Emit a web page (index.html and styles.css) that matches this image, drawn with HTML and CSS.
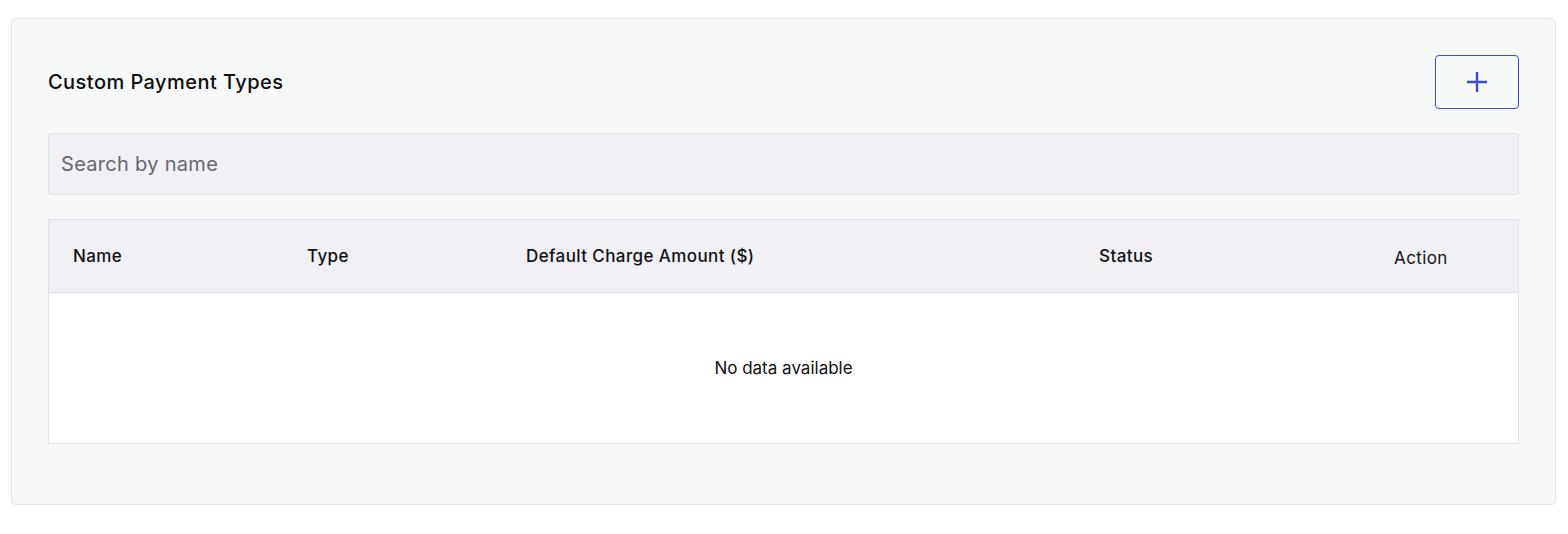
FILE: index.html
```html
<!DOCTYPE html>
<html lang="en">
<head>
<meta charset="utf-8">
<title>Custom Payment Types</title>
<link rel="stylesheet" href="styles.css">
</head>
<body>
<div class="page">
  <section class="card">
    <div class="card-head">
      <h2 class="title">Custom Payment Types</h2>
      <button class="add-btn" type="button" aria-label="Add">
        <svg width="22" height="22" viewBox="0 0 22 22" aria-hidden="true">
          <path d="M11 1v20M1 11h20" stroke="#3d49dc" stroke-width="2.4" fill="none"/>
        </svg>
      </button>
    </div>
    <input class="search" type="text" placeholder="Search by name">
    <div class="table">
      <div class="thead">
        <div class="th">Name</div>
        <div class="th">Type</div>
        <div class="th">Default Charge Amount ($)</div>
        <div class="th">Status</div>
        <div class="th th-action">Action</div>
      </div>
      <div class="empty">No data available</div>
    </div>
  </section>
</div>
</body>
</html>
```

FILE: styles.css
```css
* { box-sizing: border-box; }
html, body { margin: 0; padding: 0; background: #ffffff; }
body {
  font-family: Inter, "Noto Sans", "Liberation Sans", sans-serif;
  color: #111114;
}
.page {
  padding: 18px 12px 29px 11px;
}
.card {
  background: #f7f8f8;
  border: 1px solid #e2e3e4;
  border-radius: 5px;
  padding: 36px 36px 60px 36px;
  display: flex;
  flex-direction: column;
}
.card-head {
  display: flex;
  align-items: center;
  justify-content: space-between;
}
.title {
  margin: 0;
  font-size: 20px;
  font-weight: 500;
  letter-spacing: 0.45px;
  color: #0d0d10;
}
.add-btn {
  width: 84px;
  height: 54px;
  border: 1px solid #3d49dc;
  border-radius: 4px;
  background: transparent;
  display: flex;
  align-items: center;
  justify-content: center;
  padding: 0;
  cursor: pointer;
}
.search {
  margin-top: 24px;
  height: 62px;
  width: 100%;
  background: #f1f1f5;
  border: 1px solid #e1e2e5;
  border-radius: 3px;
  padding: 0 12px;
  font-family: inherit;
  font-size: 20px;
  letter-spacing: 0.3px;
  color: #222;
  outline: none;
}
.search::placeholder { color: #67676c; }
.table {
  margin-top: 24px;
  border: 1px solid #e1e2e5;
  background: #ffffff;
}
.thead {
  display: grid;
  grid-template-columns: 234px 219px 573px 295px 1fr;
  height: 73px;
  background: #f1f1f5;
  border-bottom: 1px solid #e1e2e5;
  align-items: center;
}
.th {
  padding-left: 24px;
  font-size: 17px;
  font-weight: 500;
  letter-spacing: 0.4px;
  color: #111114;
}
.th-action {
  font-weight: 400;
  padding-top: 3px;
}
.empty {
  height: 150px;
  display: flex;
  align-items: center;
  justify-content: center;
  font-size: 17px;
  color: #111114;
}
```
